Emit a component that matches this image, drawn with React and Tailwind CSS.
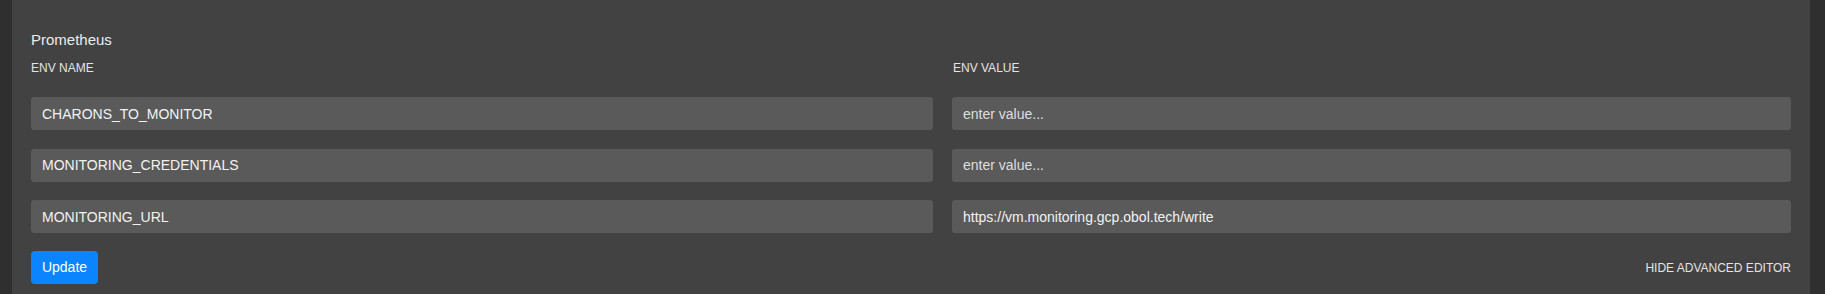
import React from 'react';

const rows = [
    { name: 'CHARONS_TO_MONITOR', value: '' },
    { name: 'MONITORING_CREDENTIALS', value: '' },
    { name: 'MONITORING_URL', value: 'https://vm.monitoring.gcp.obol.tech/write' },
];

const inputCls =
    'h-[33px] w-full rounded-[3px] bg-[#5a5a5a] px-[11px] text-[14px] text-[#f2f2f2] outline-none placeholder:text-[#dedede]';

const App = () => {
    return (
        <div
            className="flex h-[294px] w-full bg-[#2f2f2f] pl-[12px] pr-[15px]"
            style={{ fontFamily: '"Liberation Sans", Arial, sans-serif' }}
        >
            <div className="flex flex-1 flex-col bg-[#424242] px-[19px] pt-[31px]">
                <h3 className="text-[15px] leading-[18px] text-[#ececec]">Prometheus</h3>
                <div className="mt-[12px] grid grid-cols-[902px_1fr] gap-x-[19px]">
                    <label className="text-[12px] leading-[14px] uppercase text-[#e4e4e4]">ENV NAME</label>
                    <label className="text-[12px] leading-[14px] uppercase text-[#e4e4e4] pl-[1px]">ENV VALUE</label>
                </div>
                <div className="mt-[22px] grid grid-cols-[902px_1fr] gap-x-[19px] gap-y-[18.5px]">
                    {rows.map((r) => (
                        <React.Fragment key={r.name}>
                            <input className={inputCls} defaultValue={r.name} />
                            <input className={inputCls} defaultValue={r.value} placeholder="enter value..." />
                        </React.Fragment>
                    ))}
                </div>
                <div className="mt-[18px] flex items-center justify-between">
                    <button className="h-[33px] w-[67px] rounded-[4px] bg-[#0a84ff] text-[14px] text-white">Update</button>
                    <button className="text-[12px] uppercase text-[#e4e4e4]">HIDE ADVANCED EDITOR</button>
                </div>
            </div>
        </div>
    );
};

export default App;
